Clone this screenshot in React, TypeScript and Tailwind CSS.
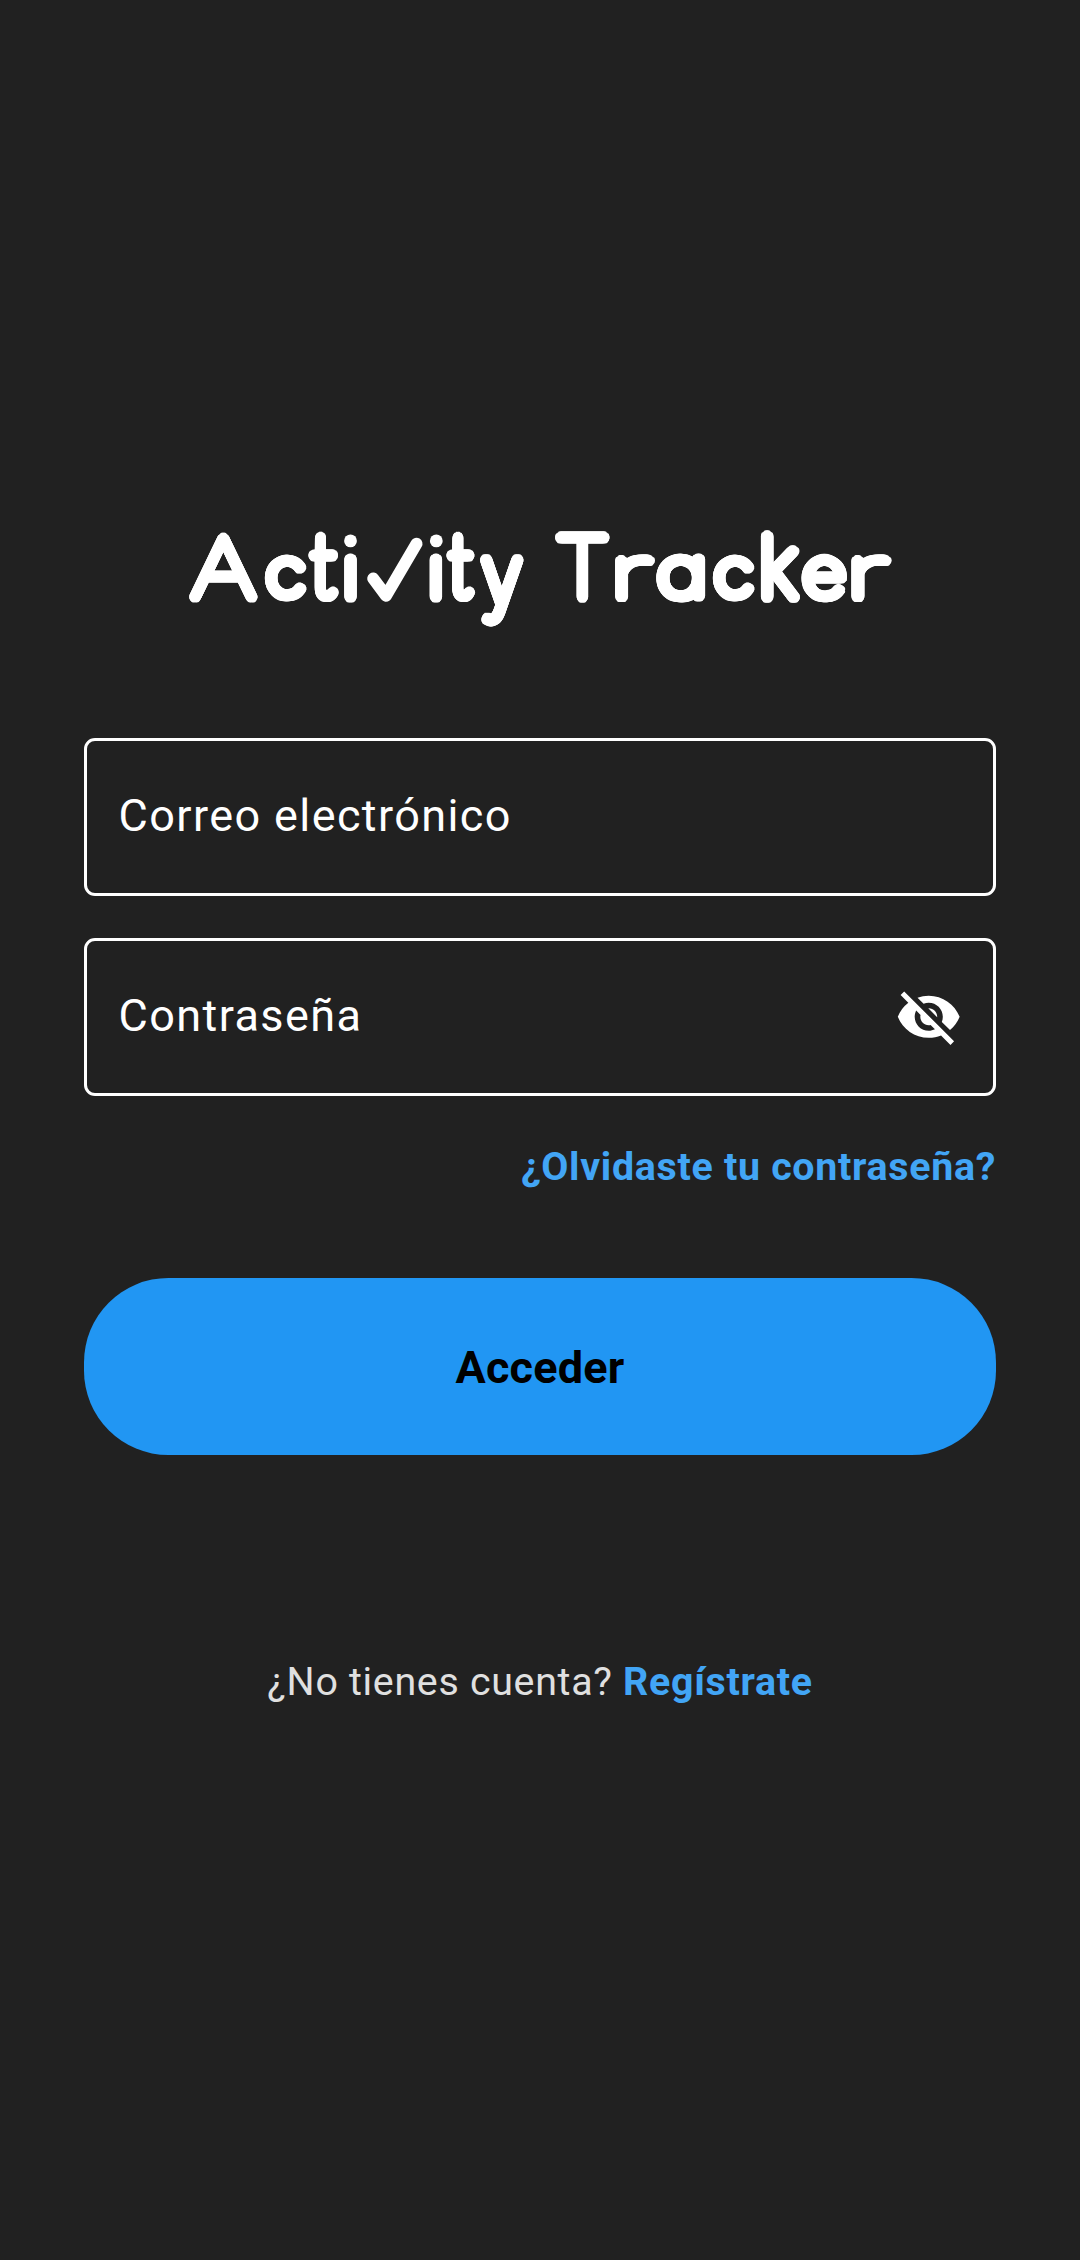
import { useState } from 'react';
import { MdVisibilityOff } from 'react-icons/md';

type Glyph = {
  char: string;
  font: 'Lato' | 'Inter';
  // ink box of the glyph at 100px: left, right, top, bottom (relative to the baseline)
  ink: [number, number, number, number];
  // outer box in the wordmark: left, right, top, bottom
  box: [number, number, number, number];
};

// Distance the round pen adds on each side of a hairline letter.
const GROW = 5.35;
const BASE_STROKE = 2.7;

const LETTERS: Glyph[] = [
  { char: 'A', font: 'Lato', ink: [2, 62, -71.5, 0], box: [19, 88, 21.5, 92.7] },
  { char: 'c', font: 'Inter', ink: [5.5, 48, -55.5, 1], box: [94.3, 136.7, 44, 92.2] },
  { char: 't', font: 'Lato', ink: [2.5, 31, -67.5, 1], box: [137.7, 169, 22, 92.3] },
  { char: 'i', font: 'Inter', ink: [10, 11.5, -54.6, 0], box: [174.3, 186.7, 44, 92.5] },
  { char: 'i', font: 'Inter', ink: [10, 11.5, -54.6, 0], box: [259.7, 272.1, 44, 92.5] },
  { char: 't', font: 'Lato', ink: [2.5, 31, -67.5, 1], box: [275.7, 305.3, 22, 92.3] },
  { char: 'y', font: 'Inter', ink: [4, 50, -54.6, 20.5], box: [309.3, 354, 44, 115.7] },
  { char: 'T', font: 'Lato', ink: [1, 56, -71.5, 0], box: [384.7, 440, 20.7, 92.7] },
  { char: 'r', font: 'Lato', ink: [8.5, 33.5, -50, 0], box: [444.7, 485.7, 44, 92.7] },
  { char: 'a', font: 'Inter', ink: [5.8, 48.3, -55.5, 1], box: [486, 534.7, 44, 92.3] },
  { char: 'c', font: 'Inter', ink: [5.5, 48, -55.5, 1], box: [542.3, 584.7, 44, 92.2] },
  { char: 'k', font: 'Inter', ink: [8.5, 46, -73, 0], box: [590, 630.7, 21, 92.7] },
  { char: 'e', font: 'Inter', ink: [5.5, 52.3, -55.5, 1], box: [631, 677.7, 44, 92.5] },
  { char: 'r', font: 'Lato', ink: [8.5, 33.5, -50, 0], box: [681, 722.3, 44, 92.7] },
];

function place({ char, ink, box }: Glyph) {
  const sy = (box[3] - box[2] - 2 * GROW) / (ink[3] - ink[2]);
  const sx = char === 'i' ? sy : (box[1] - box[0] - 2 * GROW) / (ink[1] - ink[0]);
  const cx = (box[0] + box[1]) / 2 - ((ink[0] + ink[1]) / 2) * sx;
  return {
    transform: `translate(${cx} ${box[2] + GROW - ink[2] * sy}) scale(${sx} ${sy})`,
    strokeWidth: BASE_STROKE / Math.sqrt(sx * sy),
  };
}

// Offsets that sweep the hairline letters with a round pen.
const SWEEP = [
  ...Array.from({ length: 24 }, (_, i) => [4, (i * Math.PI) / 12]),
  ...Array.from({ length: 8 }, (_, i) => [2, (i * Math.PI) / 4]),
].map(([r, a]) => [r * Math.cos(a), r * Math.sin(a)]);

function Wordmark() {
  return (
    <svg className="block h-[130px] w-[740px]" viewBox="0 0 740 130" role="img" aria-label="Activity Tracker">
      <defs>
        <clipPath id="stems">
          <path d="M0 47H740V130H0Z" />
        </clipPath>
      </defs>
      <g id="letters" fill="white" stroke="white" strokeLinejoin="round">
        {LETTERS.map((g, i) => (
          <g key={i} clipPath={g.char === 'i' ? 'url(#stems)' : undefined}>
            <text
              {...place(g)}
              fontFamily={`${g.font}, sans-serif`}
              fontWeight="100"
              fontSize="100"
              style={{ fontFeatureSettings: '"cv11"' }}
            >
              {g.char}
            </text>
          </g>
        ))}
      </g>
      {SWEEP.map(([x, y], i) => (
        <use key={i} href="#letters" x={x} y={y} />
      ))}
      <circle cx="180.5" cy="30.9" r="6.4" fill="white" />
      <circle cx="266.3" cy="30.9" r="6.4" fill="white" />
      <path d="M203.2 68.5L216 85.7L246.5 33.7" fill="none" stroke="white" strokeWidth="12" strokeLinecap="round" strokeLinejoin="round" />
    </svg>
  );
}

function Field({ label, type, secret }: { label: string; type: string; secret?: boolean }) {
  const [value, setValue] = useState('');
  return (
    <label className="flex h-[158px] items-center rounded-[11px] border-[3px] border-white pr-[31px] pl-[31.5px]">
      <input
        type={type}
        value={value}
        onChange={(e) => setValue(e.target.value)}
        placeholder={label}
        className="mb-[3px] h-[53px] min-w-0 flex-1 bg-transparent text-[45px] leading-[53px] tracking-[1.4px] text-white outline-none placeholder:text-white"
      />
      {secret && <MdVisibilityOff className="size-[67.5px] shrink-0 text-white" />}
    </label>
  );
}

export default function App() {
  return (
    <main className="flex min-h-[2260px] flex-col items-center bg-[#212121] pt-[510px] font-['Roboto',sans-serif]">
      <Wordmark />
      <form className="mt-[98px] flex w-[912px] flex-col" onSubmit={(e) => e.preventDefault()}>
        <div className="flex flex-col gap-[42px]">
          <Field label="Correo electrónico" type="email" />
          <Field label="Contraseña" type="password" secret />
        </div>
        <a href="#" className="mt-[47px] self-end text-[39.375px] leading-[47px] font-bold tracking-[0.7px] text-[#42a5f5]">
          ¿Olvidaste tu contraseña?
        </a>
        <button type="submit" className="mt-[88px] h-[177px] rounded-[84.375px] bg-[#2196f3] pt-[2px] text-[45px] leading-[53px] font-bold tracking-[0.2px] text-black">
          Acceder
        </button>
      </form>
      <p className="mt-[203px] text-[39.375px] leading-[47px] tracking-[0.7px] text-[#e0e0e0]">
        ¿No tienes cuenta?{' '}
        <a href="#" className="font-bold text-[#42a5f5]">
          Regístrate
        </a>
      </p>
    </main>
  );
}
